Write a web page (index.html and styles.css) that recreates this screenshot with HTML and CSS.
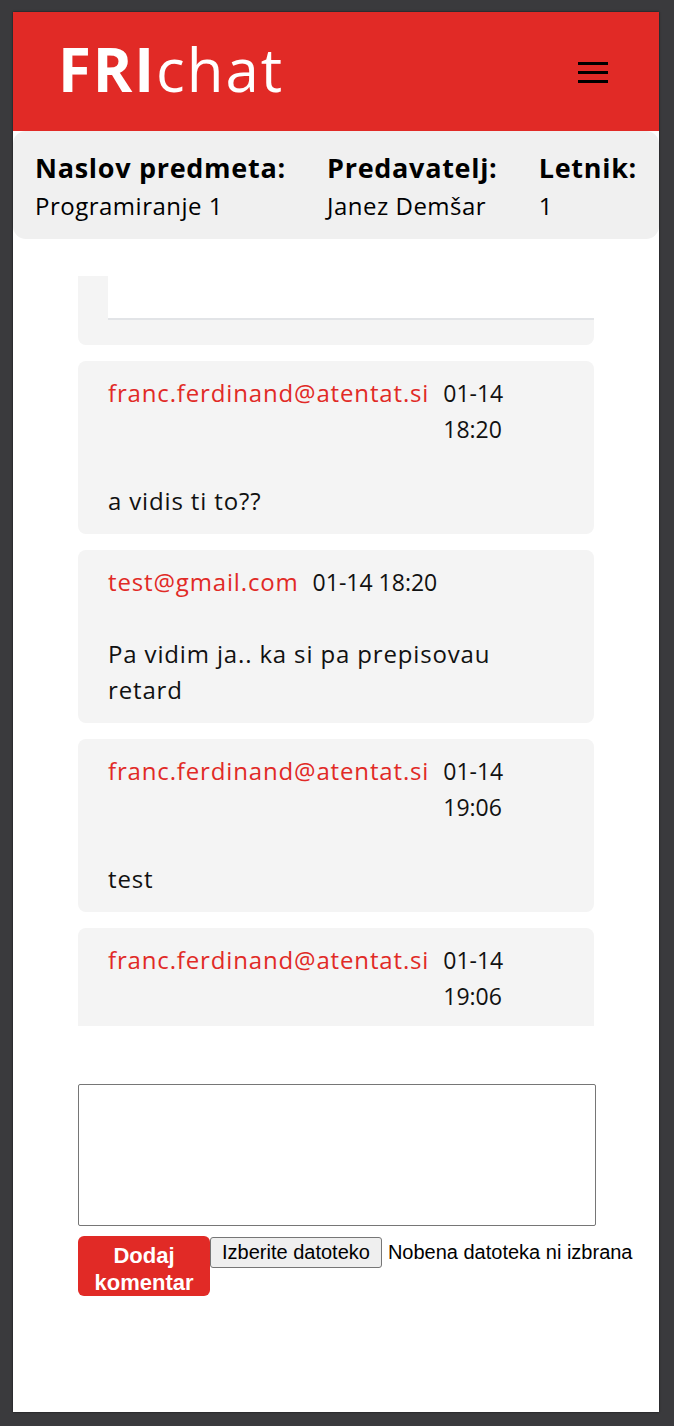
FILE: index.html
```html
<!DOCTYPE html>
<html lang="sl">
<head>
<meta charset="utf-8">
<title>FRIchat</title>
<link rel="stylesheet" href="styles.css">
</head>
<body>
<div class="window">
  <header class="topbar">
    <div class="logo"><span class="logo-bold">FRI</span>chat</div>
    <button class="menu" aria-label="Meni">
      <svg width="30" height="22" viewBox="0 0 30 22"><rect x="0" y="0" width="30" height="3" fill="#000"/><rect x="0" y="9" width="30" height="3" fill="#000"/><rect x="0" y="18" width="30" height="3" fill="#000"/></svg>
    </button>
  </header>

  <section class="info">
    <div class="info-col">
      <div class="info-label">Naslov predmeta:</div>
      <div class="info-value">Programiranje 1</div>
    </div>
    <div class="info-col">
      <div class="info-label">Predavatelj:</div>
      <div class="info-value">Janez Demšar</div>
    </div>
    <div class="info-col">
      <div class="info-label">Letnik:</div>
      <div class="info-value">1</div>
    </div>
  </section>

  <main class="chat">
    <div class="card card-partial">
      <div class="attachment"></div>
    </div>
    <div class="card">
      <div class="meta"><span class="author">franc.ferdinand@atentat.si</span><span class="date">01-14 18:20</span></div>
      <p class="msg">a vidis ti to??</p>
    </div>
    <div class="card">
      <div class="meta"><span class="author">test@gmail.com</span><span class="date">01-14 18:20</span></div>
      <p class="msg">Pa vidim ja.. ka si pa prepisovau retard</p>
    </div>
    <div class="card">
      <div class="meta"><span class="author">franc.ferdinand@atentat.si</span><span class="date">01-14 19:06</span></div>
      <p class="msg">test</p>
    </div>
    <div class="card">
      <div class="meta"><span class="author">franc.ferdinand@atentat.si</span><span class="date">01-14 19:06</span></div>
      <p class="msg">test</p>
    </div>
  </main>

  <form class="composer">
    <textarea class="input"></textarea>
    <div class="actions">
      <button type="button" class="submit">Dodaj komentar</button>
      <span class="file-btn">Izberite datoteko</span>
      <span class="file-name">Nobena datoteka ni izbrana</span>
    </div>
  </form>
</div>
</body>
</html>
```

FILE: styles.css
```css
* { box-sizing: border-box; }

html, body {
  margin: 0;
  padding: 0;
}

body {
  background: #3a3a3d;
  padding: 12px 15px 14px 13px;
  font-family: "Open Sans", "DejaVu Sans", sans-serif;
}

.window {
  background: #fff;
  height: 1400px;
  overflow: hidden;
  box-shadow: 0 0 2px rgba(0, 0, 0, 0.7);
}

.topbar {
  height: 119px;
  background: #e12a26;
  display: flex;
  align-items: center;
  justify-content: space-between;
  padding: 0 51px 0 45px;
}

.logo {
  color: #fff;
  font-size: 60px;
  line-height: 1;
  font-weight: 400;
  letter-spacing: 1.9px;
  padding-bottom: 5px;
}

.logo-bold {
  font-weight: 700;
}

.menu {
  border: 0;
  background: transparent;
  padding: 0;
  display: flex;
  margin-top: 2px;
}

.info {
  background: #f0f0f0;
  height: 108px;
  border-radius: 13px;
  display: flex;
  justify-content: space-between;
  padding: 19px 22px 0 22px;
  color: #000;
}

.info-label {
  font-weight: 700;
  font-size: 27px;
  line-height: 36px;
  letter-spacing: 0.7px;
}

.info-value {
  font-size: 24px;
  line-height: 36px;
  letter-spacing: 0.5px;
  margin-top: 2px;
}

.chat {
  width: 516px;
  height: 750px;
  margin: 37px auto 0;
  overflow: hidden;
  display: flex;
  flex-direction: column;
  gap: 16px;
}

.card {
  background: #f4f4f4;
  border-radius: 8px;
  padding: 14px 30px 15px;
  flex-shrink: 0;
}

.card-partial {
  height: 69px;
  padding: 0;
  border-radius: 0 0 8px 8px;
}

.attachment {
  margin-left: 30px;
  height: 44px;
  background: #fff;
  border-bottom: 2px solid #e2e4e7;
}

.meta {
  display: flex;
  gap: 14px;
  font-size: 24px;
  line-height: 36px;
}

.author {
  color: #e12a26;
  flex-shrink: 0;
  letter-spacing: 0.85px;
}

.date {
  color: #111;
  font-size: 23px;
}

.msg {
  margin: 36px 0 0;
  font-size: 24px;
  line-height: 36px;
  letter-spacing: 0.85px;
  color: #111;
}

.composer {
  width: 518px;
  margin: 58px 0 0 65px;
}

.input {
  display: block;
  width: 518px;
  height: 142px;
  border: 1px solid #767676;
  border-radius: 2px;
  resize: none;
  background: #fff;
}

.actions {
  display: flex;
  align-items: flex-start;
  margin-top: 10px;
  font-family: "Liberation Sans", Arial, sans-serif;
  white-space: nowrap;
}

.submit {
  flex-shrink: 0;
  width: 132px;
  height: 60px;
  background: #e12a26;
  color: #fff;
  border: 0;
  border-radius: 6px;
  font-family: "Liberation Sans", Arial, sans-serif;
  font-weight: 700;
  font-size: 22px;
  line-height: 27px;
  padding: 6px 4px 0;
  white-space: normal;
}

.file-btn {
  flex-shrink: 0;
  margin-top: 1px;
  height: 31px;
  display: inline-flex;
  align-items: center;
  padding: 0 11px;
  border: 1px solid #767676;
  border-radius: 3px;
  background: #efefef;
  font-size: 20px;
  color: #000;
}

.file-name {
  flex-shrink: 0;
  margin-left: 6px;
  margin-top: 1px;
  line-height: 31px;
  font-size: 20px;
  color: #000;
}
```
